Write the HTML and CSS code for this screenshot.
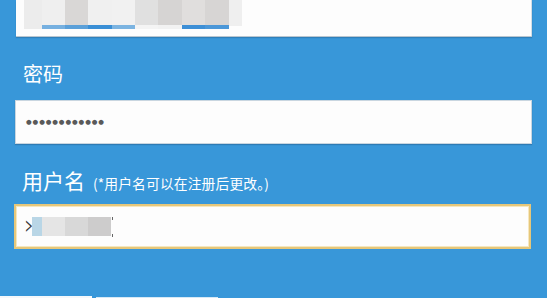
FILE: index.html
```html
<!DOCTYPE html>
<html lang="zh-CN">

<head>
  <meta charset="UTF-8">
  <meta name="viewport" content="width=device-width, initial-scale=1.0">
  <title>注册</title>
  <link rel="stylesheet" href="styles.css">
</head>

<body>
  <div class="form">
    <div class="input input-top">
      <div class="mosaic">
        <span class="cell"></span>
        <span class="cell"></span>
        <span class="cell"></span>
        <span class="cell"></span>
        <span class="cell"></span>
        <span class="cell"></span>
        <span class="cell"></span>
        <span class="cell"></span>
        <span class="cell"></span>
        <span class="cell"></span>
      </div>
    </div>

    <label class="label label-pass">密码</label>
    <div class="input input-pass">
      <span class="dots">●●●●●●●●●●●●</span>
    </div>

    <label class="label label-user">用户名<small>(*用户名可以在注册后更改。)</small></label>
    <div class="input input-user">
      <span class="caret">›</span>
      <span class="blur">
        <span class="bit"></span>
        <span class="bit"></span>
        <span class="bit"></span>
        <span class="bit"></span>
      </span>
      <span class="cursor"></span>
    </div>
  </div>

  <div class="footer">
    <span class="edge edge-white"></span>
    <span class="edge edge-light"></span>
  </div>
</body>

</html>
```

FILE: styles.css
```css
* {
  margin: 0;
  padding: 0;
  box-sizing: border-box;
}

html,
body {
  width: 547px;
  height: 298px;
  overflow: hidden;
}

body {
  position: relative;
  background: #3897d9;
  font-family: "Noto Sans CJK SC", "Noto Sans", sans-serif;
  color: #fff;
}

.form {
  display: flex;
  flex-direction: column;
  padding-left: 15px;
  width: 532px;
}

.input {
  background: #fdfdfd;
  display: flex;
  align-items: center;
}

.input-top {
  margin-left: 1px;
  height: 36px;
  align-items: flex-start;
  padding-left: 8px;
  border-right: 1px solid #d4dde4;
  box-shadow: 0 1px 0 #b9c6d0, 0 2px 1px rgba(20, 60, 100, 0.25);
}

.mosaic {
  display: flex;
  height: 29px;
}

.cell {
  width: 23.4px;
  height: 29px;
  border-bottom: 4px solid transparent;
}

.cell:nth-child(1) { width: 17.5px; background: #ececec; border-bottom-color: #ececec; }
.cell:nth-child(2) { background: #efefef; border-bottom-color: #76b0e0; }
.cell:nth-child(3) { background: #d9d7d6; border-bottom-color: #5ba0d9; }
.cell:nth-child(4) { background: #f0f0f0; border-bottom-color: #3a8fd6; }
.cell:nth-child(5) { background: #f1f1f1; border-bottom-color: #7cb4e1; }
.cell:nth-child(6) { background: #e0e0e0; border-bottom-color: #f4f4f4; }
.cell:nth-child(7) { background: #d6d4d3; border-bottom-color: #f2f2f2; }
.cell:nth-child(8) { background: #e0dedd; border-bottom-color: #3d8fd6; }
.cell:nth-child(9) { background: #d7d5d4; border-bottom-color: #4b97d8; }
.cell:nth-child(10) { width: 13.5px; height: 26px; border-bottom: 0; background: #efefef; }

.label {
  display: block;
  padding-left: 8px;
  font-size: 20px;
  line-height: 24px;
}

.label-pass {
  margin-top: 26px;
  height: 24px;
}

.input-pass {
  margin-top: 14px;
  width: 517px;
  height: 44px;
  padding-left: 10px;
  border: 1px solid #c9d6e0;
  box-shadow: 0 1px 1px rgba(20, 60, 100, 0.3);
}

.dots {
  color: #5a5a5a;
  font-size: 6.5px;
  letter-spacing: 0.9px;
  font-family: "DejaVu Sans", sans-serif;
}

.label-user {
  margin-top: 22px;
  padding-left: 7px;
  font-size: 21px;
  line-height: 28px;
  height: 28px;
}

.label-user small {
  margin-left: 8px;
  font-size: 13.8px;
  letter-spacing: 0.1px;
}

.input-user {
  margin-top: 10px;
  margin-left: -1px;
  width: 517px;
  height: 45px;
  padding-left: 8px;
  border: 2px solid #e6c77a;
  box-shadow: inset 0 0 0 1px #f6e7bf;
}

.caret {
  color: #3a3a3a;
  font-size: 26px;
  line-height: 20px;
  margin-top: -3px;
  margin-right: -2px;
  font-family: "DejaVu Sans", sans-serif;
  font-weight: 200;
}

.blur {
  display: flex;
  height: 19px;
}

.bit {
  width: 23px;
  height: 19px;
}

.bit:nth-child(1) { width: 10px; background: #b9d6e6; }
.bit:nth-child(2) { background: #e5e5e5; }
.bit:nth-child(3) { background: #d8d8d8; }
.bit:nth-child(4) { background: #cdcccc; }

.cursor {
  width: 1px;
  height: 20px;
  margin-left: 1px;
  border-top: 3px solid #666;
  border-bottom: 3px solid #666;
}

.footer {
  position: absolute;
  left: 0;
  bottom: 0;
  display: flex;
  align-items: flex-end;
}

.edge {
  display: block;
}

.edge-white {
  width: 92px;
  height: 2px;
  background: #f4f8fb;
}

.edge-light {
  width: 122px;
  height: 1px;
  margin-left: 4px;
  background: #d6e9f6;
}
```
